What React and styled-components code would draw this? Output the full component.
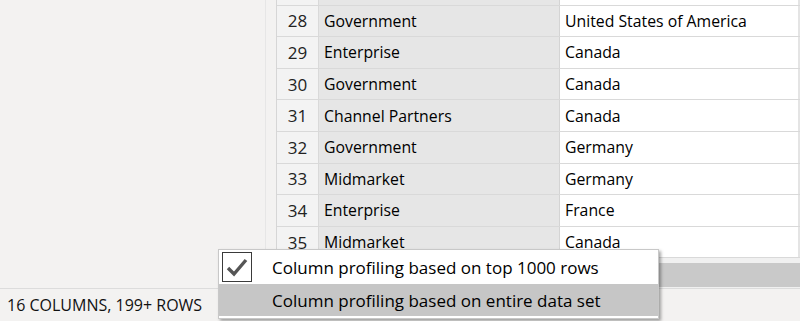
import React from 'react'
import styled, { createGlobalStyle } from 'styled-components'

const GlobalStyle = createGlobalStyle`
  html, body { margin: 0; padding: 0; }
  body {
    width: 800px;
    height: 321px;
    overflow: hidden;
    background: #f3f2f1;
    font-family: "Open Sans", "Noto Sans", sans-serif;
    color: #000;
  }
`

const rows = [
  { n: 27, seg: '', country: '' },
  { n: 28, seg: 'Government', country: 'United States of America' },
  { n: 29, seg: 'Enterprise', country: 'Canada' },
  { n: 30, seg: 'Government', country: 'Canada' },
  { n: 31, seg: 'Channel Partners', country: 'Canada' },
  { n: 32, seg: 'Government', country: 'Germany' },
  { n: 33, seg: 'Midmarket', country: 'Germany' },
  { n: 34, seg: 'Enterprise', country: 'France' },
  { n: 35, seg: 'Midmarket', country: 'Canada' },
]

function App() {
  return (
    <Page>
      <GlobalStyle />
      <Main>
        <SidePanel />
        <Grid>
          <Rows>
            {rows.map((r, i) => (
              <Row key={r.n} $first={i === 0}>
                <NumCell>{i === 0 ? '' : r.n}</NumCell>
                <SegCell>{r.seg}</SegCell>
                <CountryCell>{r.country}</CountryCell>
              </Row>
            ))}
          </Rows>
          <ScrollTrack>
            <ScrollThumb />
          </ScrollTrack>
        </Grid>
      </Main>
      <StatusBar>16 COLUMNS, 199+ ROWS</StatusBar>
      <Menu>
        <MenuItem>
          <CheckBox>
            <svg width="26" height="26" viewBox="0 0 26 26">
              <path d="M4 14 L10 20 L22 6" fill="none" stroke="#555" strokeWidth="3.4" strokeLinejoin="miter" />
            </svg>
          </CheckBox>
          <MenuLabel>Column profiling based on top 1000 rows</MenuLabel>
        </MenuItem>
        <MenuItem $hover>
          <CheckSpace />
          <MenuLabel>Column profiling based on entire data set</MenuLabel>
        </MenuItem>
      </Menu>
    </Page>
  )
}

const Page = styled.div`
  position: relative;
  width: 800px;
  height: 321px;
  display: flex;
  flex-direction: column;
`

const Main = styled.div`
  display: flex;
  height: 288px;
  border-bottom: 1px solid #dcdcdc;
`

const SidePanel = styled.div`
  width: 265px;
  border-right: 1px solid #e6e6e6;
  margin-right: 10px;
  background: #f3f2f1;
`

const Grid = styled.div`
  flex: 1;
  display: flex;
  flex-direction: column;
  overflow: hidden;
  border-left: 1px solid #d6d6d6;
`

const Rows = styled.div`
  height: 258px;
  overflow: hidden;
  display: flex;
  flex-direction: column;
  background: #fff;
`

const Row = styled.div`
  flex: none;
  display: flex;
  height: 30.6px;
  border-bottom: 1px solid #d9d9d9;
  margin-top: ${p => (p.$first ? '-26px' : '0')};
`

const NumCell = styled.div`
  width: 41px;
  background: #f3f3f3;
  border-right: 1px solid #d9d9d9;
  display: flex;
  align-items: center;
  justify-content: center;
  font-size: 17px;
  color: #222;
`

const SegCell = styled.div`
  width: 235px;
  background: #e6e6e6;
  border-right: 1px solid #d4d4d4;
  display: flex;
  align-items: center;
  padding-left: 5px;
  font-size: 15.8px;
`

const CountryCell = styled.div`
  flex: 1;
  background: #fff;
  display: flex;
  align-items: center;
  padding-left: 5px;
  font-size: 15.8px;
  border-right: 2px solid #e4e4e4;
`

const ScrollTrack = styled.div`
  flex: 1;
  background: #f0f0f0;
  padding: 5px 0 1px 0;
  display: flex;
`

const ScrollThumb = styled.div`
  flex: 1;
  background: #c9c9c9;
`

const StatusBar = styled.div`
  flex: 1;
  display: flex;
  align-items: center;
  padding-left: 7px;
  font-size: 16px;
  color: #111;
  background: #f3f2f1;
`

const Menu = styled.div`
  position: absolute;
  left: 218px;
  top: 249px;
  width: 439px;
  background: #fff;
  border: 1px solid #c8c8c8;
  box-shadow: 2px 2px 3px rgba(0, 0, 0, 0.35);
  padding-bottom: 2px;
`

const MenuItem = styled.div`
  display: flex;
  align-items: center;
  height: ${p => (p.$hover ? '32px' : '34px')};
  background: ${p => (p.$hover ? '#c6c6c6' : '#fff')};
`

const CheckBox = styled.div`
  width: 28px;
  height: 28px;
  margin-left: 3px;
  border: 1px solid #3a3a3a;
  display: flex;
  align-items: center;
  justify-content: center;
`

const CheckSpace = styled.div`
  width: 30px;
  margin-left: 3px;
`

const MenuLabel = styled.span`
  margin-left: 20px;
  font-size: 17px;
  color: #000;
`

export default App
